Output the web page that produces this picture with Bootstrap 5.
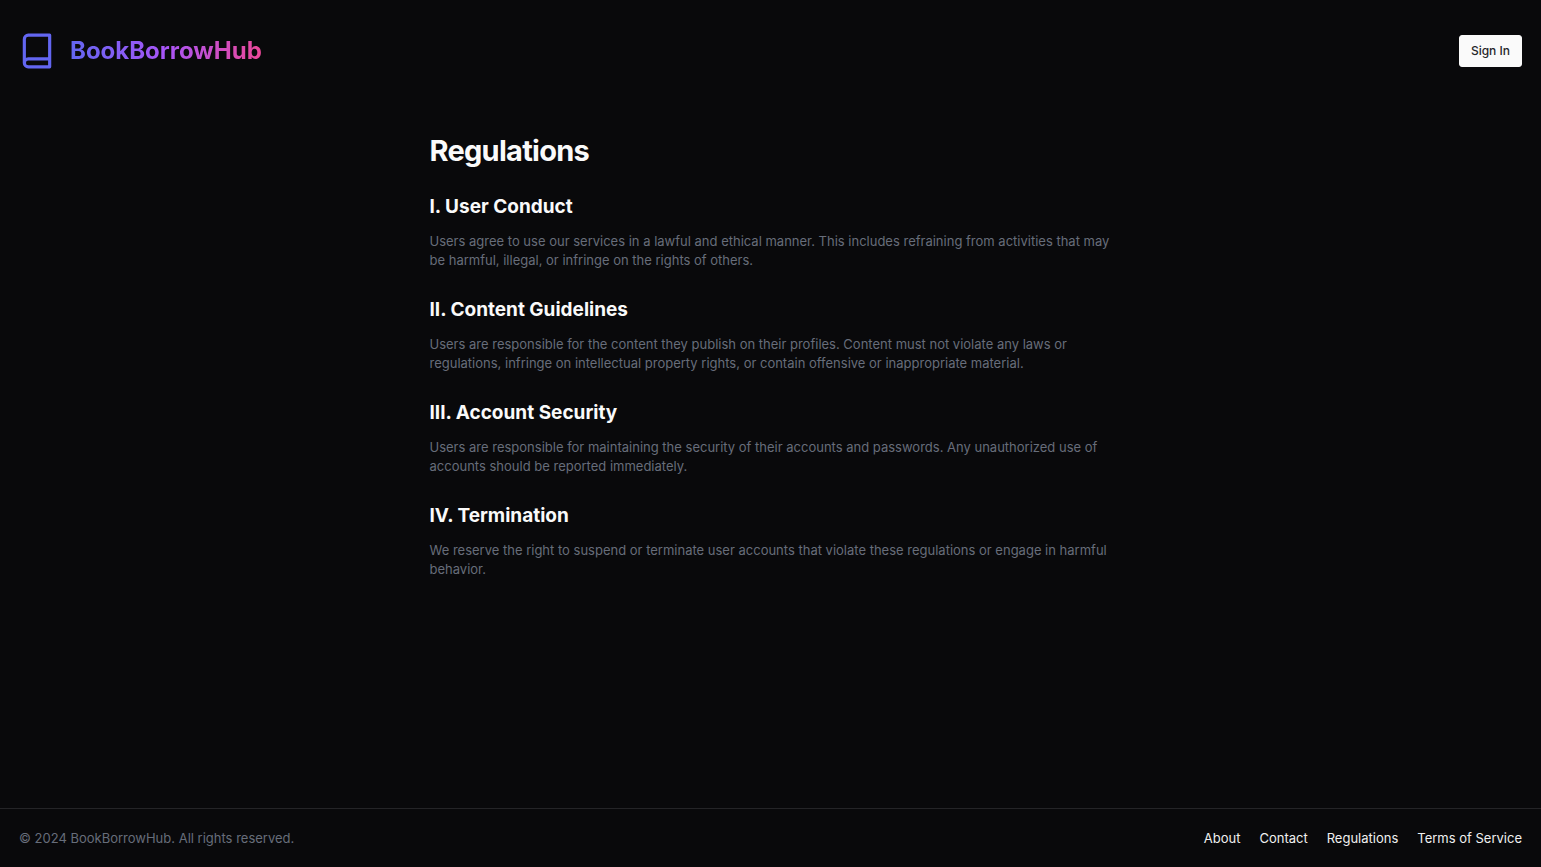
<!DOCTYPE html>
<html lang="en">
<head>
<meta charset="utf-8">
<meta name="viewport" content="width=device-width, initial-scale=1">
<title>Regulations - BookBorrowHub</title>
<link href="https://cdn.jsdelivr.net/npm/bootstrap@5.3.0/dist/css/bootstrap.min.css" rel="stylesheet">
<style>
  body { font-family: Inter, "Liberation Sans", sans-serif; font-size: 13px; background: #09090b; color: #fafafa; }
  .site-header { padding: 32px 19px 33px 18px; }
  .brand-link { gap: 14px; }
  .brand-name { font-size: 24px; line-height: 32px; font-weight: 700; color: transparent; background: linear-gradient(to right, #6366f1, #a855f7, #ec4899); -webkit-background-clip: text; background-clip: text; }
  .btn-signin { --bs-btn-bg: #fafafa; --bs-btn-color: #27272a; --bs-btn-border-color: #fafafa; --bs-btn-hover-bg: #e4e4e7; --bs-btn-hover-color: #18181b; font-size: 12px; line-height: 20px; font-weight: 500; padding: 5px 11px; border-radius: 3px; }
  .article { max-width: 682px; padding-top: 29px; }
  .article h1 { font-size: 29px; line-height: 38px; font-weight: 700; letter-spacing: -0.025em; margin-bottom: 24px; }
  .article h2 { font-size: 19px; line-height: 26px; font-weight: 700; margin-bottom: 12px; }
  .article p { line-height: 19px; margin-bottom: 27px; }
  .muted-text { color: #676d7a; }
  .site-footer { border-top: 1px solid #242427; padding: 20px 19px 19px; line-height: 19px; }
  .footer-links { gap: 19px; }
  .footer-links a { color: #f0f0f0; text-decoration: none; }
</style>
</head>
<body class="d-flex flex-column min-vh-100">
<header class="site-header d-flex align-items-center justify-content-between">
  <a href="#" class="brand-link d-flex align-items-center text-decoration-none">
    <svg width="38" height="38" viewBox="0 0 24 24" fill="none" stroke="#6366f1" stroke-width="2" stroke-linecap="round" stroke-linejoin="round" aria-hidden="true"><path d="M4 19.5v-15A2.5 2.5 0 0 1 6.5 2H20v20H6.5a2.5 2.5 0 0 1 0-5H20"/></svg>
    <span class="brand-name">BookBorrowHub</span>
  </a>
  <button type="button" class="btn btn-signin">Sign In</button>
</header>
<main class="container-fluid flex-grow-1">
  <article class="article mx-auto">
    <h1>Regulations</h1>
    <section><h2>I. User Conduct</h2>
    <p class="muted-text">Users agree to use our services in a lawful and ethical manner. This includes refraining from activities that may be harmful, illegal, or infringe on the rights of others.</p></section>
    <section><h2>II. Content Guidelines</h2>
    <p class="muted-text">Users are responsible for the content they publish on their profiles. Content must not violate any laws or regulations, infringe on intellectual property rights, or contain offensive or inappropriate material.</p></section>
    <section><h2>III. Account Security</h2>
    <p class="muted-text">Users are responsible for maintaining the security of their accounts and passwords. Any unauthorized use of accounts should be reported immediately.</p></section>
    <section><h2>IV. Termination</h2>
    <p class="muted-text">We reserve the right to suspend or terminate user accounts that violate these regulations or engage in harmful behavior.</p></section>
  </article>
</main>
<footer class="site-footer d-flex flex-wrap align-items-center justify-content-between">
  <span class="muted-text">© 2024 BookBorrowHub. All rights reserved.</span>
  <nav class="footer-links d-flex flex-wrap" aria-label="Footer">
    <a href="#">About</a><a href="#">Contact</a><a href="#">Regulations</a><a href="#">Terms of Service</a>
  </nav>
</footer>
<script src="https://cdn.jsdelivr.net/npm/bootstrap@5.3.0/dist/js/bootstrap.bundle.min.js"></script>
</body>
</html>
